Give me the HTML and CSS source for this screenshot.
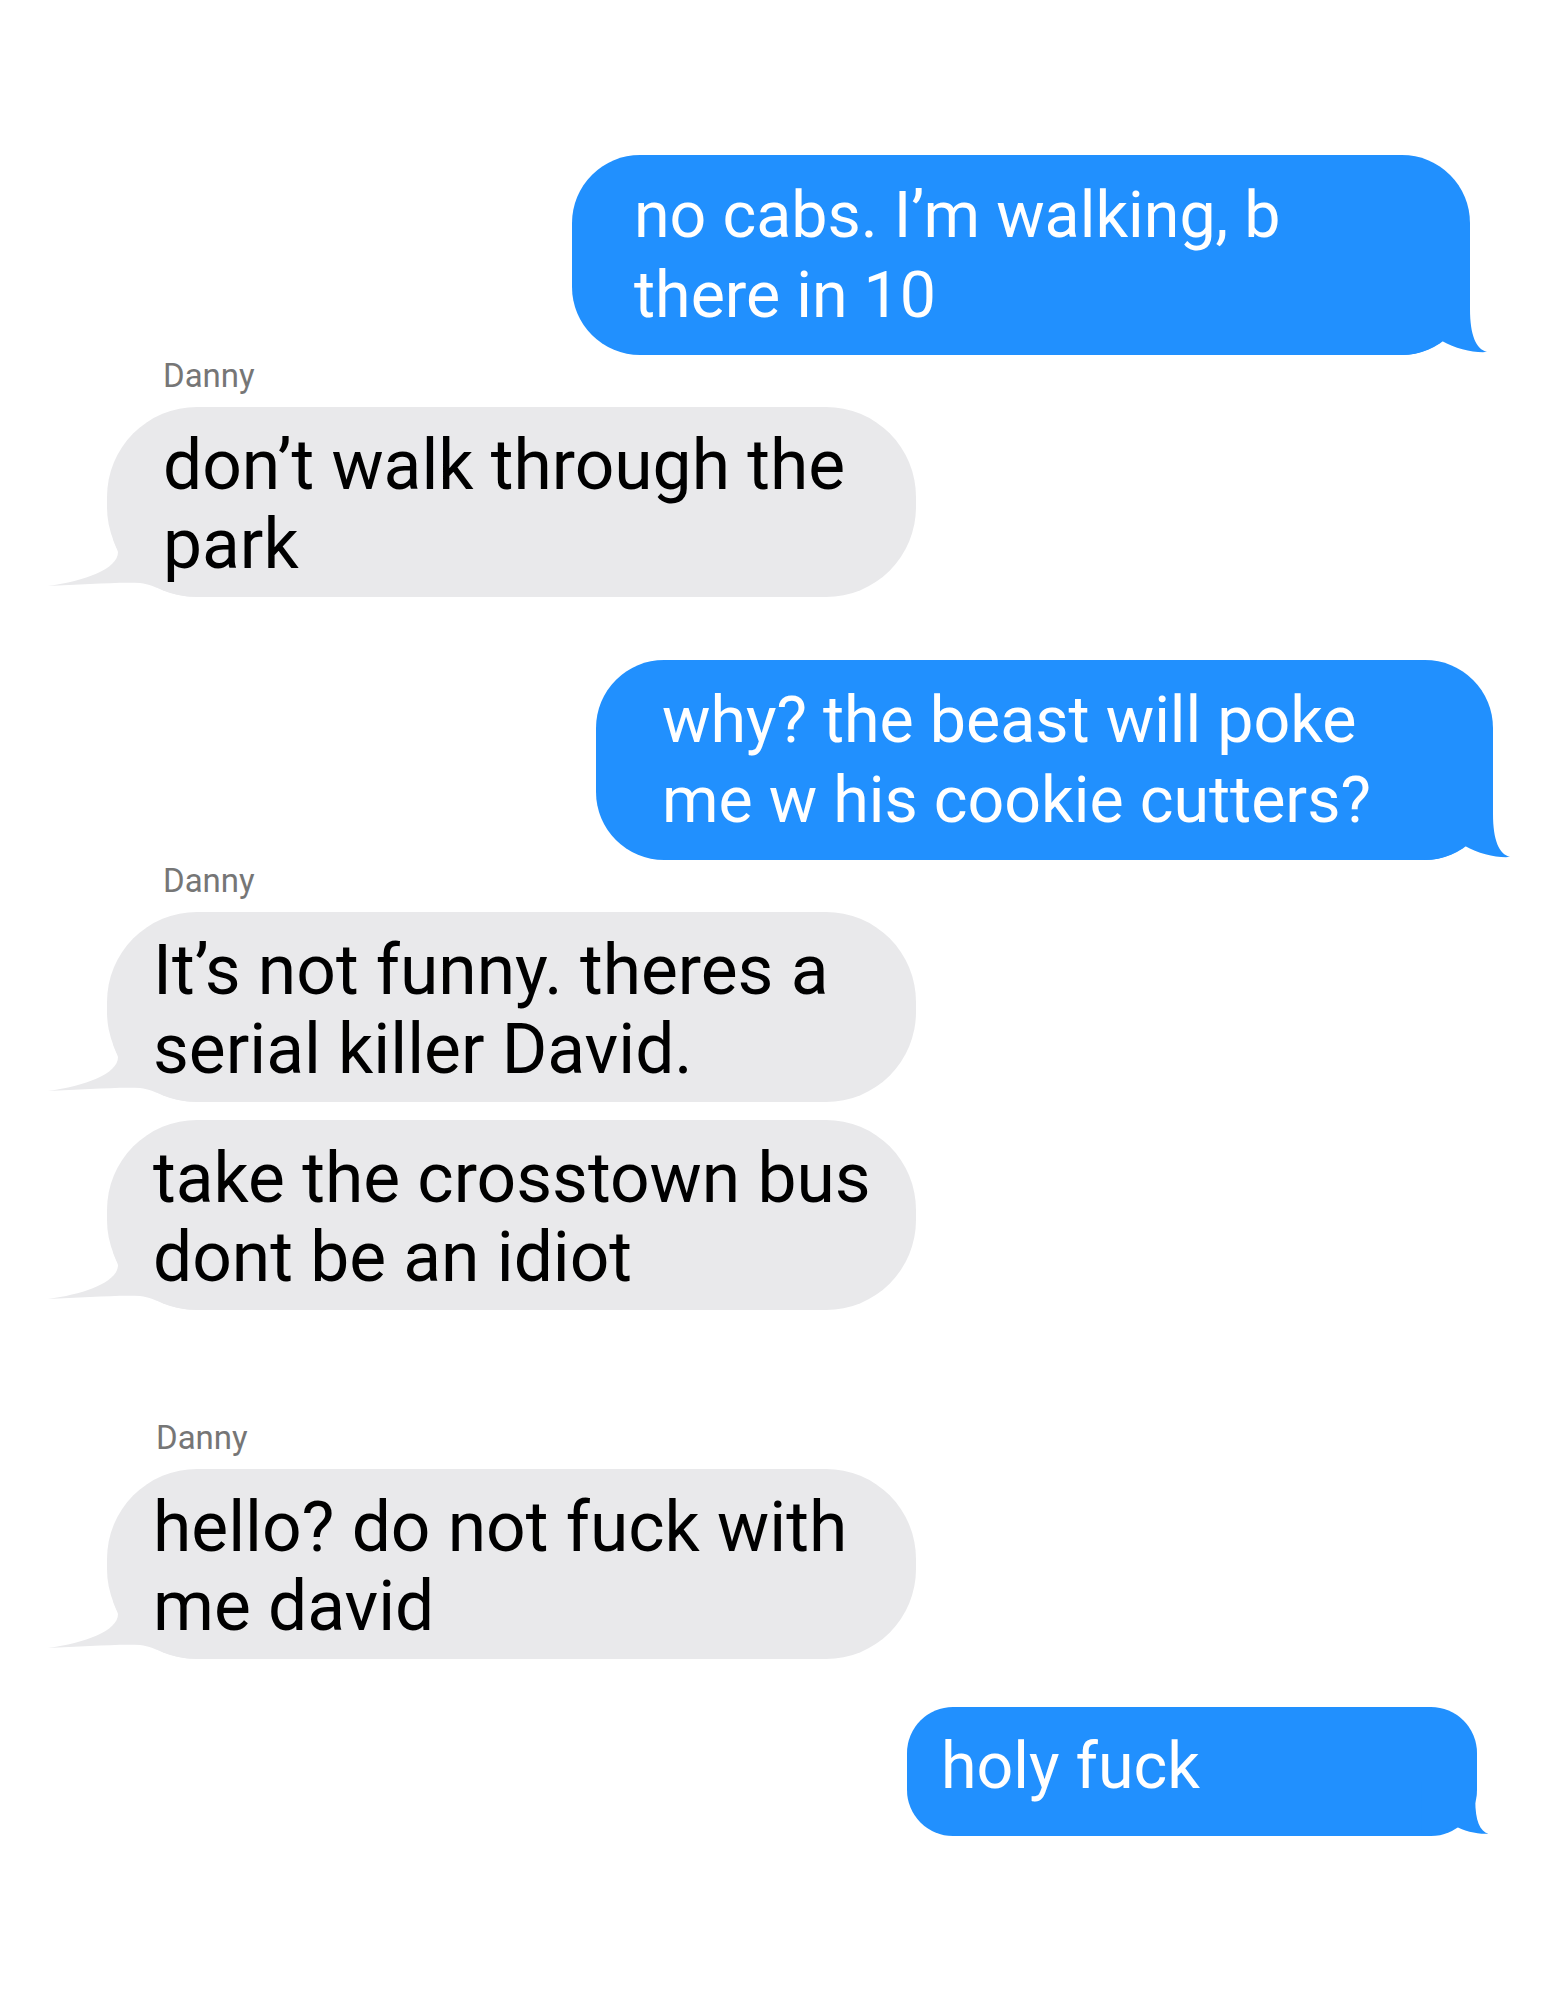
FILE: index.html
```html
<!DOCTYPE html>
<html>
  <head>
    <link rel="stylesheet" href="styles.css">
    <title>Danny</title>
  </head>
  <body>
    <div class="thread">
      <div class="bubble sent sent-first">
        no cabs. I’m walking, b<br>there in 10
        <svg class="tail tail-sent" viewBox="0 0 90 70"><path d="M70,0 L70,24 C70,50 76,64 87,67 C74,68 56,64 42,56 C32,64 18,70 0,70 L0,0 Z"/></svg>
      </div>

      <div class="sender">Danny</div>
      <div class="bubble received received-first">
        don’t walk through the<br>park
        <svg class="tail tail-recv" viewBox="0 0 160 58"><path d="M73,0 C75,6 77,10 78,13 C78,30 45,42 8,47 C40,46 75,43 100,44 C118,46 128,58 160,58 L160,0 Z"/></svg>
      </div>

      <div class="bubble sent sent-second">
        why? the beast will poke<br>me w his cookie cutters?
        <svg class="tail tail-sent" viewBox="0 0 90 70"><path d="M70,0 L70,24 C70,50 76,64 87,67 C74,68 56,64 42,56 C32,64 18,70 0,70 L0,0 Z"/></svg>
      </div>

      <div class="sender">Danny</div>
      <div class="bubble received">
        It’s not funny. theres a<br>serial killer David.
        <svg class="tail tail-recv" viewBox="0 0 160 58"><path d="M73,0 C75,6 77,10 78,13 C78,30 45,42 8,47 C40,46 75,43 100,44 C118,46 128,58 160,58 L160,0 Z"/></svg>
      </div>
      <div class="bubble received stacked">
        take the crosstown bus<br>dont be an idiot
        <svg class="tail tail-recv" viewBox="0 0 160 58"><path d="M73,0 C75,6 77,10 78,13 C78,30 45,42 8,47 C40,46 75,43 100,44 C118,46 128,58 160,58 L160,0 Z"/></svg>
      </div>

      <div class="sender sender-late">Danny</div>
      <div class="bubble received">
        hello? do not fuck with<br>me david
        <svg class="tail tail-recv" viewBox="0 0 160 58"><path d="M73,0 C75,6 77,10 78,13 C78,30 45,42 8,47 C40,46 75,43 100,44 C118,46 128,58 160,58 L160,0 Z"/></svg>
      </div>

      <div class="bubble sent sent-short">
        holy fuck
        <svg class="tail tail-sent tail-small" viewBox="0 0 90 70"><path d="M70,0 L70,24 C70,50 76,64 87,67 C74,68 56,64 42,56 C32,64 18,70 0,70 L0,0 Z"/></svg>
      </div>
    </div>
  </body>
</html>
```

FILE: styles.css
```css
body {
  margin: 0;
  background: #ffffff;
  font-family: Roboto, "Liberation Sans", sans-serif;
}

.thread {
  display: flex;
  flex-direction: column;
  align-items: flex-start;
  padding: 155px 0 160px;
}

.bubble {
  position: relative;
  z-index: 0;
  box-sizing: border-box;
}

.tail {
  position: absolute;
  bottom: 0;
  z-index: -1;
}

/* blue, right side */
.sent {
  align-self: flex-end;
  background-color: #2190fe;
  color: #ffffff;
  font-size: 64.5px;
  line-height: 80px;
  padding: 20px 0 20px 62px;
  border-radius: 68px;
}

.sent .tail path {
  fill: #2190fe;
}

.tail-sent {
  right: -20px;
  width: 90px;
  height: 70px;
}

.tail-small {
  right: -14px;
  width: 70px;
  height: 54px;
}

.sent-first {
  width: 898px;
  margin-right: 75px;
}

.sent-second {
  width: 897px;
  margin-right: 52px;
  margin-top: 63px;
  padding-left: 66px;
}

.sent-short {
  width: 570px;
  margin-right: 68px;
  margin-top: 48px;
  padding: 19px 0 30px 34px;
  border-radius: 46px;
}

/* grey, left side */
.sender {
  margin: 3px 0 13px 163px;
  font-size: 33px;
  line-height: 36px;
  color: #767676;
}

.sender-late {
  margin-top: 110px;
  margin-left: 156px;
}

.received {
  width: 809px;
  margin-left: 107px;
  background-color: #e9e9eb;
  color: #000000;
  font-size: 69.5px;
  line-height: 79px;
  padding: 19px 0 13px 46px;
  border-radius: 90px;
}

.received-first {
  padding-left: 56px;
}

.received .tail path {
  fill: #e9e9eb;
}

.tail-recv {
  left: -67px;
  width: 160px;
  height: 58px;
}

.stacked {
  margin-top: 18px;
}
```
